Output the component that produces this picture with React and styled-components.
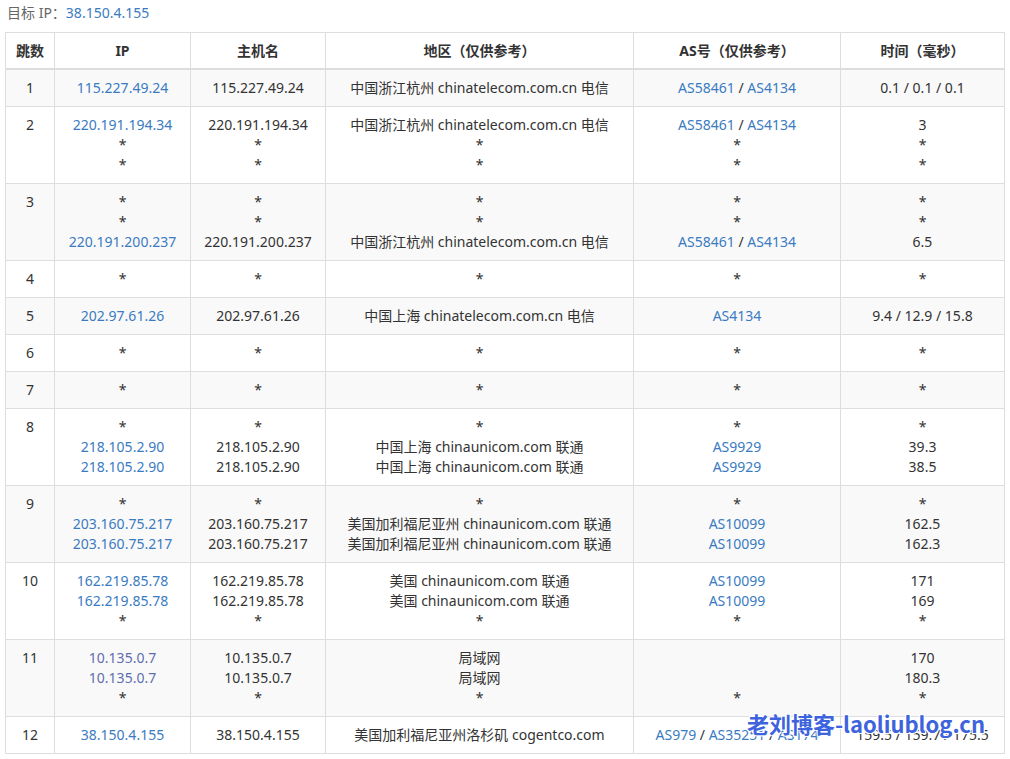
import React from "react";
import styled, { createGlobalStyle } from "styled-components";

const GlobalStyle = createGlobalStyle`
  body {
    margin: 0;
    background: #fff;
    font-family: "Noto Sans", "Open Sans", "Noto Sans CJK SC", sans-serif;
    font-size: 14px;
    color: #333;
  }
`;

const hops = [
  { hop: 1, lines: [["115.227.49.24", "115.227.49.24", "中国浙江杭州 chinatelecom.com.cn 电信", ["AS58461", "AS4134"], "0.1 / 0.1 / 0.1"]] },
  {
    hop: 2,
    lines: [
      ["220.191.194.34", "220.191.194.34", "中国浙江杭州 chinatelecom.com.cn 电信", ["AS58461", "AS4134"], "3"],
      ["*", "*", "*", "*", "*"],
      ["*", "*", "*", "*", "*"],
    ],
  },
  {
    hop: 3,
    lines: [
      ["*", "*", "*", "*", "*"],
      ["*", "*", "*", "*", "*"],
      ["220.191.200.237", "220.191.200.237", "中国浙江杭州 chinatelecom.com.cn 电信", ["AS58461", "AS4134"], "6.5"],
    ],
  },
  { hop: 4, lines: [["*", "*", "*", "*", "*"]] },
  { hop: 5, lines: [["202.97.61.26", "202.97.61.26", "中国上海 chinatelecom.com.cn 电信", ["AS4134"], "9.4 / 12.9 / 15.8"]] },
  { hop: 6, lines: [["*", "*", "*", "*", "*"]] },
  { hop: 7, lines: [["*", "*", "*", "*", "*"]] },
  {
    hop: 8,
    lines: [
      ["*", "*", "*", "*", "*"],
      ["218.105.2.90", "218.105.2.90", "中国上海 chinaunicom.com 联通", ["AS9929"], "39.3"],
      ["218.105.2.90", "218.105.2.90", "中国上海 chinaunicom.com 联通", ["AS9929"], "38.5"],
    ],
  },
  {
    hop: 9,
    lines: [
      ["*", "*", "*", "*", "*"],
      ["203.160.75.217", "203.160.75.217", "美国加利福尼亚州 chinaunicom.com 联通", ["AS10099"], "162.5"],
      ["203.160.75.217", "203.160.75.217", "美国加利福尼亚州 chinaunicom.com 联通", ["AS10099"], "162.3"],
    ],
  },
  {
    hop: 10,
    lines: [
      ["162.219.85.78", "162.219.85.78", "美国 chinaunicom.com 联通", ["AS10099"], "171"],
      ["162.219.85.78", "162.219.85.78", "美国 chinaunicom.com 联通", ["AS10099"], "169"],
      ["*", "*", "*", "*", "*"],
    ],
  },
  {
    hop: 11,
    lines: [
      ["10.135.0.7", "10.135.0.7", "局域网", "", "170"],
      ["10.135.0.7", "10.135.0.7", "局域网", "", "180.3"],
      ["*", "*", "*", "*", "*"],
    ],
  },
  { hop: 12, lines: [["38.150.4.155", "38.150.4.155", "美国加利福尼亚州洛杉矶 cogentco.com", ["AS979", "AS35251", "AS174"], "159.5 / 159.7 / 175.5"]] },
];

export default function App() {
  return (
    <Page>
      <GlobalStyle />
      <Target>
        目标 IP：<Link>38.150.4.155</Link>
      </Target>
      <TableWrap>
        <Table>
          <colgroup>
            <col style={{ width: 49 }} />
            <col style={{ width: 136 }} />
            <col style={{ width: 135 }} />
            <col style={{ width: 308 }} />
            <col style={{ width: 207 }} />
            <col />
          </colgroup>
          <thead>
            <tr>
              <Th>跳数</Th>
              <Th>IP</Th>
              <Th>主机名</Th>
              <Th>地区（仅供参考）</Th>
              <Th>AS号（仅供参考）</Th>
              <Th>时间（毫秒）</Th>
            </tr>
          </thead>
          <tbody>
            {hops.map((row) => (
              <Tr key={row.hop} $striped={row.hop % 2 === 1}>
                <Td>{row.hop}</Td>
                <Td>
                  {row.lines.map((l, i) => (
                    <Line key={i}>{l[0] === "*" ? "*" : <Link $muted={row.hop === 11}>{l[0]}</Link>}</Line>
                  ))}
                </Td>
                <Td>
                  {row.lines.map((l, i) => (
                    <Line key={i}>{l[1]}</Line>
                  ))}
                </Td>
                <Td>
                  {row.lines.map((l, i) => (
                    <Line key={i}>{l[2]}</Line>
                  ))}
                </Td>
                <Td>
                  {row.lines.map((l, i) => (
                    <Line key={i}>
                      {Array.isArray(l[3])
                        ? l[3].map((as, j) => (
                            <React.Fragment key={as}>
                              {j > 0 && " / "}
                              <Link>{as}</Link>
                            </React.Fragment>
                          ))
                        : l[3]}
                    </Line>
                  ))}
                </Td>
                <Td>
                  {row.lines.map((l, i) => (
                    <Line key={i}>{l[4]}</Line>
                  ))}
                </Td>
              </Tr>
            ))}
          </tbody>
        </Table>
        <Watermark>老刘博客-laoliublog.cn</Watermark>
      </TableWrap>
    </Page>
  );
}

const Page = styled.div`
  padding: 0 5px;
`;

const Target = styled.div`
  padding: 3px 0 0 2px;
  height: 20px;
  line-height: 20px;
  margin-bottom: 9px;
  color: #666;
`;

const Link = styled.span`
  color: ${(p) => (p.$muted ? "#5d6fae" : "#3a7bc2")};
`;

const TableWrap = styled.div`
  position: relative;
  width: 1000px;
`;

const Table = styled.table`
  width: 1000px;
  table-layout: fixed;
  border-collapse: collapse;
  border: 1px solid #ddd;
  line-height: 20px;
`;

const Th = styled.th`
  border: 1px solid #ddd;
  border-bottom: 2px solid #ddd;
  padding: 8px 0 7px;
  font-weight: bold;
  text-align: center;
  color: #333;
`;

const Tr = styled.tr`
  background: ${(p) => (p.$striped ? "#f9f9f9" : "#fff")};
`;

const Td = styled.td`
  border: 1px solid #ddd;
  padding: 8px 0;
  text-align: center;
  vertical-align: top;
  white-space: nowrap;
`;

const Line = styled.div`
  min-height: 20px;
`;

const Watermark = styled.div`
  position: absolute;
  right: 20px;
  bottom: 18px;
  font-family: "Noto Sans CJK SC", "Noto Sans", sans-serif;
  font-weight: bold;
  font-size: 22px;
  line-height: 26px;
  color: #3d63dd;
  text-shadow: 1px 1px 0 #fff, -1px -1px 0 #fff, 1px -1px 0 #fff, -1px 1px 0 #fff;
`;
